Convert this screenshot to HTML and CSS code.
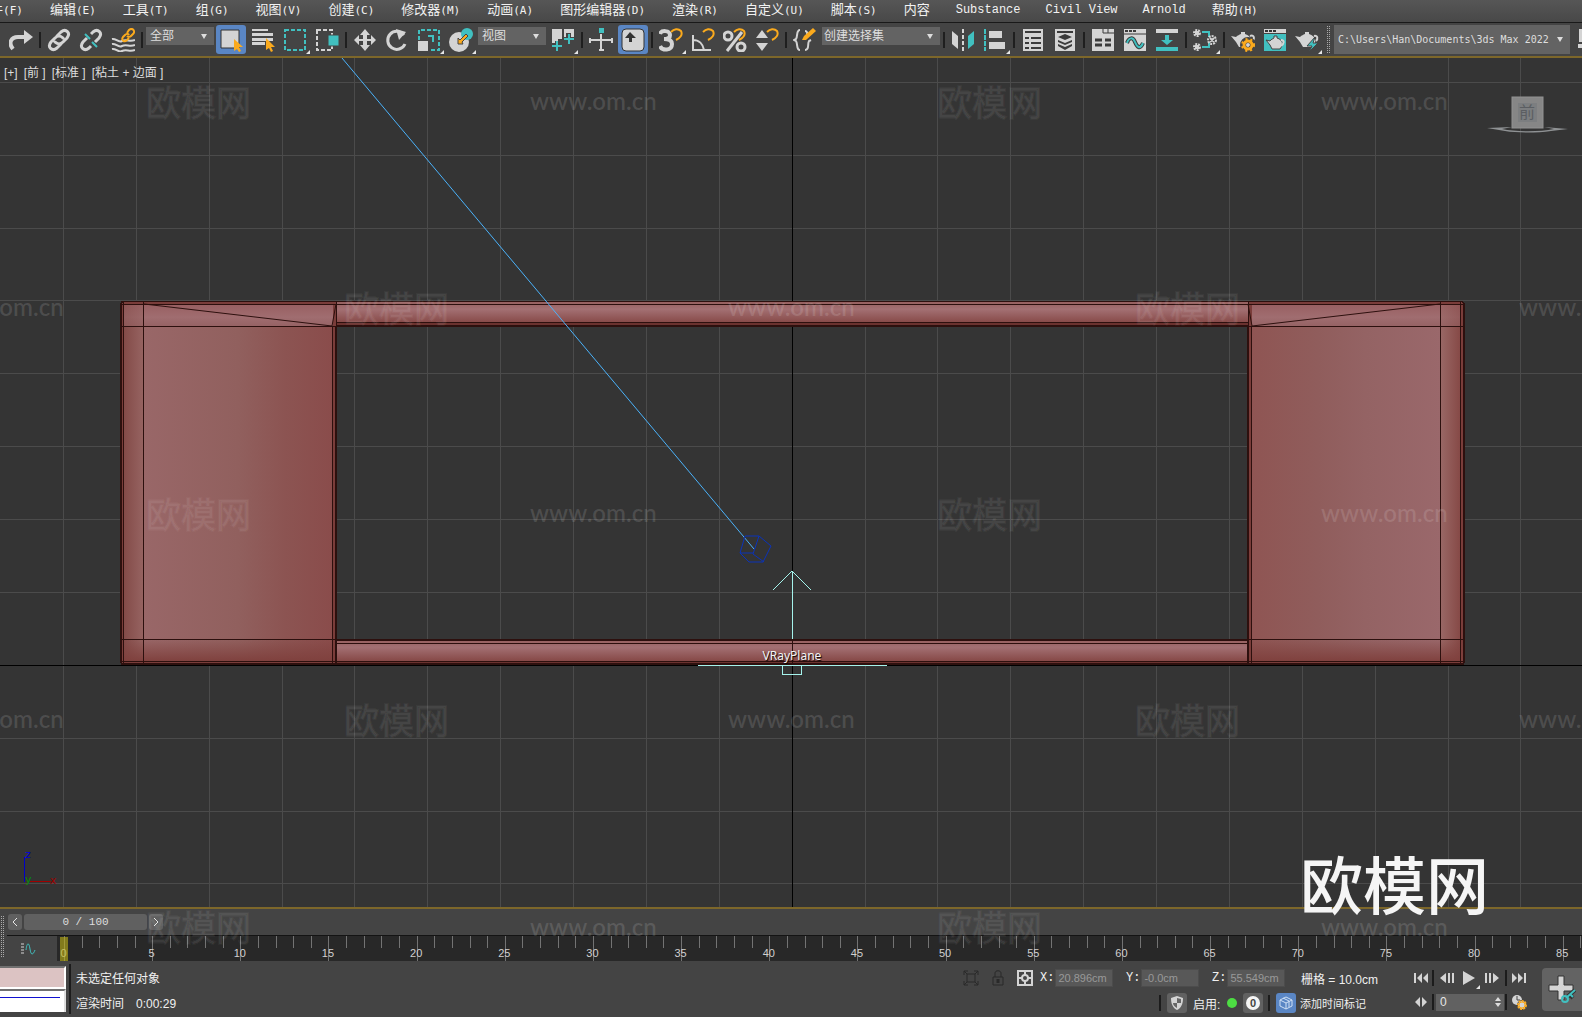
FILE: index.html
```html
<!DOCTYPE html>
<html lang="zh-CN">
<head>
<meta charset="utf-8">
<title>3ds Max 2022</title>
<link rel="stylesheet" href="styles.css">
</head>
<body>
<div class="app">
  <nav class="menu">
    <a href="#">文件<span class="key">(F)</span></a>
    <a href="#">编辑<span class="key">(E)</span></a>
    <a href="#">工具<span class="key">(T)</span></a>
    <a href="#">组<span class="key">(G)</span></a>
    <a href="#">视图<span class="key">(V)</span></a>
    <a href="#">创建<span class="key">(C)</span></a>
    <a href="#">修改器<span class="key">(M)</span></a>
    <a href="#">动画<span class="key">(A)</span></a>
    <a href="#">图形编辑器<span class="key">(D)</span></a>
    <a href="#">渲染<span class="key">(R)</span></a>
    <a href="#">自定义<span class="key">(U)</span></a>
    <a href="#">脚本<span class="key">(S)</span></a>
    <a href="#">内容</a>
    <a href="#" class="latin">Substance</a>
    <a href="#" class="latin">Civil View</a>
    <a href="#" class="latin">Arnold</a>
    <a href="#">帮助<span class="key">(H)</span></a>
  </nav>

  <div class="toolbar">
    <button class="tool" aria-label="重做"><svg viewBox="0 0 24 24"><path d="M4 21C-1 15 2 9 9 9h7" fill="none" stroke="#d4d4d4" stroke-width="4"/><path d="M15 2l9 7-9 7z" fill="#d4d4d4"/></svg></button>
    <span class="sep"></span>
    <button class="tool" aria-label="链接"><svg viewBox="0 0 24 24" fill="none" stroke="#d4d4d4" stroke-width="3" stroke-linecap="round"><path d="M10 8l4-4c5-4 10 1 6 6l-4 4c-3 3-6 2-8 0M14 16l-4 4c-5 4-10-1-6-6l4-4c3-3 6-2 8 0"/></svg></button>
    <button class="tool" aria-label="取消链接"><svg viewBox="0 0 24 24" fill="none" stroke="#d4d4d4" stroke-width="3"><path d="M12 6l2-2c5-4 10 1 6 6l-4 4M12 18l-2 2c-5 4-10-1-6-6l4-4"/><path d="M6 6l5 5M13 14l5 5" stroke="#41c0c0" stroke-width="2"/></svg></button>
    <button class="tool" aria-label="绑定"><svg viewBox="0 0 24 24" fill="none"><path d="M1 11c4-1 6 4 10 2s8 1 13-1M1 16c4-1 6 4 10 2s8 1 13-1M1 21c4-1 6 4 10 2s8 1 13-1" stroke="#d4d4d4" stroke-width="2"/><path d="M16 5l2-3c3-3 7 1 4 4l-2 2c-1 1-3 1-4 0M18 7c-1-2-3-1-4 0l-2 2c-2 3 1 6 4 3l2-2" stroke="#fbaa1d" stroke-width="2"/></svg></button>
    <span class="sep"></span>
    <select class="pick pick-filter" aria-label="选择过滤器"><option>全部</option></select>
    <button class="tool on" aria-label="选择对象"><svg viewBox="0 0 24 24"><path d="M2 2h18v18H2z" fill="#d4d4d4" stroke="#333" stroke-width="1"/><path d="M15 11v12l3-2 2 3 2-1-2-4h4z" fill="#fbaa1d"/></svg></button>
    <button class="tool" aria-label="按名称选择"><svg viewBox="0 0 24 24"><path d="M1 1h16v2H1zM1 5h21v3H1zM1 10h21v3H1zM1 14h13v3H1z" fill="#d4d4d4"/><path d="M15 10v12l3-2 2 4 2-1-2-4h4z" fill="#fbaa1d"/></svg></button>
    <button class="tool more" aria-label="矩形选择区域"><svg viewBox="0 0 24 24"><path d="M2 2h20v20H2z" fill="none" stroke="#41c0c0" stroke-width="2" stroke-dasharray="4 2"/></svg></button>
    <button class="tool" aria-label="窗口交叉"><svg viewBox="0 0 24 24"><path d="M2 2h15v20H2z" fill="none" stroke="#d4d4d4" stroke-width="2" stroke-dasharray="4 2"/><path d="M13 7h11v11H13z" fill="#41c0c0" stroke="#444"/></svg></button>
    <span class="sep"></span>
    <button class="tool" aria-label="移动"><svg viewBox="0 0 24 24"><path d="M12 1l5 6h-3v4h4V7l5 5-5 5v-4h-4v4h3l-5 6-5-6h3v-4H6v4l-5-5 5-5v4h4V7H7z" fill="#d4d4d4"/></svg></button>
    <button class="tool" aria-label="旋转"><svg viewBox="0 0 24 24"><path d="M19 7a9 9 0 1 0 1 9" fill="none" stroke="#d4d4d4" stroke-width="3"/><path d="M11 1l10 3-7 8z" fill="#d4d4d4"/></svg></button>
    <button class="tool more" aria-label="缩放"><svg viewBox="0 0 24 24"><path d="M2 12V2h20v20H13" fill="none" stroke="#41c0c0" stroke-width="2" stroke-dasharray="4 2"/><path d="M1 13h10v10H1z" fill="#d4d4d4"/><path d="M11 8h5v6" fill="none" stroke="#41c0c0" stroke-width="2"/></svg></button>
    <button class="tool more" aria-label="放置"><svg viewBox="0 0 24 24"><circle cx="10" cy="14" r="10" fill="#d4d4d4"/><circle cx="18" cy="6" r="6" fill="#41c0c0"/><path d="M17 6l2 2-6 6 1 2H9v-6l2 2z" fill="#fbaa1d" stroke="#444"/></svg></button>
    <select class="pick pick-filter" aria-label="参考坐标系"><option>视图</option></select>
    <button class="tool more" aria-label="使用轴点中心"><svg viewBox="0 0 24 24"><path d="M1 1h10v10H7v4H1zM13 1h10v12h-3V5h-5v4h-2z" fill="#d4d4d4"/><path d="M6 13v10M1 18h10M18 6v10M13 11h10" stroke="#444" stroke-width="4"/><path d="M6 13v10M1 18h10M18 6v10M13 11h10" stroke="#41c0c0" stroke-width="2"/></svg></button>
    <span class="sep"></span>
    <button class="tool" aria-label="选择并操纵"><svg viewBox="0 0 24 24"><path d="M12 6v17M2 12h20" stroke="#d4d4d4" stroke-width="2"/><path d="M1 10v5M23 10v5M10 22h5" stroke="#d4d4d4" stroke-width="2"/><path d="M10 0h5v5h-5z" fill="#41c0c0"/></svg></button>
    <button class="tool on" aria-label="键盘快捷键覆盖"><svg viewBox="0 0 24 24"><rect x="1" y="1" width="22" height="22" rx="4" fill="#d4d4d4" stroke="#333"/><path d="M9 4l6 6h-4v4H8v-4H4z" fill="#333"/></svg></button>
    <span class="sep"></span>
    <button class="tool more" aria-label="捕捉开关"><svg viewBox="0 0 24 24" fill="none"><path d="M1 6c1-4 10-4 10 1 0 3-2 4-6 4 5 0 8 1 8 5 0 7-10 7-12 2" stroke="#d4d4d4" stroke-width="4"/><path d="M12 4c3-3 7-4 10-1 3 4-1 7-5 9" stroke="#444" stroke-width="4"/><path d="M12 4c3-3 7-4 10-1 2 4-1 7-5 9" stroke="#fbaa1d" stroke-width="2"/></svg></button>
    <button class="tool" aria-label="角度捕捉"><svg viewBox="0 0 24 24" fill="none"><path d="M2 7v15h18M2 12c6 0 10 4 11 10" stroke="#d4d4d4" stroke-width="2"/><path d="M12 4c3-3 7-4 10-1 2 4-1 7-5 9" stroke="#fbaa1d" stroke-width="2"/></svg></button>
    <button class="tool" aria-label="百分比捕捉"><svg viewBox="0 0 24 24" fill="none"><g stroke="#d4d4d4" stroke-width="3"><circle cx="5" cy="8" r="4"/><circle cx="18" cy="19" r="4"/><path d="M19 4L4 23"/></g><path d="M11 4c3-3 7-4 10-1 2 4-1 7-5 9" stroke="#fbaa1d" stroke-width="2"/></svg></button>
    <button class="tool" aria-label="微调器捕捉"><svg viewBox="0 0 24 24" fill="none"><path d="M7 2l6 8H1zM7 23l6-8H1z" fill="#d4d4d4"/><path d="M12 4c3-3 7-4 10-1 2 4-1 7-5 9" stroke="#fbaa1d" stroke-width="2"/></svg></button>
    <span class="sep"></span>
    <button class="tool" aria-label="编辑命名选择集"><svg viewBox="0 0 24 24" fill="none"><path d="M7 2C3 2 5 8 3 11l-2 1 2 1c2 3 0 9 4 9M12 3c3 0 2 3 2 6M12 22c5 0 2-6 4-9l2-1" stroke="#d4d4d4" stroke-width="2"/><path d="M9 12l2-4 9-8 3 3-10 9z" fill="#fbaa1d"/></svg></button>
    <select class="pick pick-set" aria-label="命名选择集"><option>创建选择集</option></select>
    <span class="sep"></span>
    <button class="tool" aria-label="镜像"><svg viewBox="0 0 24 24"><path d="M1 3l6 5v13l-6-5z" fill="#d4d4d4"/><path d="M23 3l-6 5v13l6-5z" fill="#41c0c0"/><path d="M12 1v22" stroke="#d4d4d4" stroke-width="2" stroke-dasharray="4 2"/></svg></button>
    <button class="tool more" aria-label="对齐"><svg viewBox="0 0 24 24"><path d="M2 1v22" stroke="#41c0c0" stroke-width="2" stroke-dasharray="5 1"/><path d="M6 3h13v7H6zM6 14h16v7H6z" fill="#d4d4d4"/></svg></button>
    <span class="sep"></span>
    <button class="tool" aria-label="层资源管理器"><svg viewBox="0 0 24 24"><path d="M2 1h20v22H2z" fill="#d4d4d4"/><path d="M4 4h16M4 10h4M10 10h10M4 15h4M10 15h10M4 20h4M10 20h10" stroke="#3b3b3b" stroke-width="2"/></svg></button>
    <button class="tool" aria-label="层"><svg viewBox="0 0 24 24"><path d="M2 1h20v22H2z" fill="#d4d4d4"/><path d="M4 3h16v2H4zM12 6l7 3-7 3-7-3zM5 12l7 3 7-3v2l-7 3-7-3zM5 16l7 3 7-3v2l-7 4-7-4z" fill="#3b3b3b"/></svg></button>
    <span class="sep"></span>
    <button class="tool" aria-label="显示功能区"><svg viewBox="0 0 24 24"><path d="M1 1h22v22H1z" fill="#d4d4d4"/><path d="M12 1v4h11M17 1v4" fill="none" stroke="#3b3b3b"/><path d="M4 12h7M14 12h6M4 17h7M14 17h6" fill="none" stroke="#3b3b3b" stroke-width="3"/></svg></button>
    <button class="tool" aria-label="曲线编辑器"><svg viewBox="0 0 24 24" fill="none"><path d="M1 1h22v22H1z" fill="#d4d4d4"/><path d="M1 6h22" stroke="#3b3b3b"/><path d="M2 3h3M6 3h3M10 3h3" stroke="#3b3b3b" stroke-width="2"/><path d="M4 15c2-6 6-6 8-1s5 8 8 1" stroke="#3b3b3b" stroke-width="4"/><path d="M4 15c2-6 6-6 8-1s5 8 8 1" stroke="#41c0c0" stroke-width="2"/></svg></button>
    <button class="tool" aria-label="图解视图"><svg viewBox="0 0 24 24"><path d="M1 1h22v4H1z" fill="#d4d4d4"/><path d="M1 19h22v4H1zM10 7h4v5h4l-6 5-6-5h4z" fill="#41c0c0"/></svg></button>
    <span class="sep"></span>
    <button class="tool more" aria-label="材质编辑器"><svg viewBox="0 0 24 24" fill="none"><path d="M9 4h7v5M9 19h7v-5" stroke="#41c0c0" stroke-width="2"/><g stroke="#d4d4d4" stroke-width="2" stroke-dasharray="2 1"><circle cx="4" cy="5" r="3"/><circle cx="4" cy="19" r="3"/><circle cx="19" cy="12" r="4"/></g><path d="M3 4h2v2H3zM3 18h2v2H3zM17 10l4 4M21 10l-4 4" stroke="#d4d4d4" stroke-width="2"/></svg></button>
    <span class="sep"></span>
    <button class="tool" aria-label="渲染设置"><svg viewBox="0 0 24 24" fill="none"><path d="M0 8l5 1c2-2 3-2 5-3V4h4v2c7 2 8 8 4 13H8L5 14z" fill="#d4d4d4"/><path d="M19 8c5-2 5 4 1 6" stroke="#d4d4d4" stroke-width="2"/><circle cx="17" cy="17" r="5" stroke="#444" stroke-width="6"/><circle cx="17" cy="17" r="6" stroke="#fbaa1d" stroke-width="2" stroke-dasharray="2 3"/><circle cx="17" cy="17" r="4" stroke="#fbaa1d" stroke-width="3"/></svg></button>
    <button class="tool" aria-label="渲染帧窗口"><svg viewBox="0 0 24 24" fill="none"><path d="M1 1h22v4H1z" fill="#d4d4d4"/><path d="M1 6h22v17H1z" fill="#41c0c0"/><path d="M2 3h3M6 3h3M10 3h3" stroke="#333" stroke-width="2"/><path d="M3 12l4 1c1-2 3-2 4-3V8h3v2c6 2 7 6 3 11H9l-2-4z" fill="#d4d4d4" stroke="#444"/><path d="M18 12c4 0 3 4 0 6" stroke="#d4d4d4" stroke-width="2"/></svg></button>
    <button class="tool more" aria-label="渲染产品"><svg viewBox="0 0 24 24" fill="none"><path d="M0 8l5 1c2-2 3-2 5-3V4h4v2c7 2 8 8 4 13H8L5 14z" fill="#d4d4d4"/><path d="M19 8c4-1 4 3 2 5" stroke="#d4d4d4" stroke-width="2"/><path d="M20 9l-8 9h5l-3 6 9-9h-5z" fill="#41c0c0" stroke="#444"/></svg></button>
    <span class="grip"></span>
    <select class="pick pick-path" aria-label="项目文件夹"><option>C:\Users\Han\Documents\3ds Max 2022</option></select>
    <button class="tool last" aria-label="项目"><svg viewBox="0 0 24 24"><path d="M4 1h4v13H4zM3 16h10v4H3z" fill="#d4d4d4"/></svg></button>
  </div>

  <main class="viewport">
    <svg class="scene" viewBox="0 58 1582 849" preserveAspectRatio="xMidYMid slice">
      <defs>
        <linearGradient id="legL"><stop offset="0" stop-color="#996768"/><stop offset=".5" stop-color="#91605e"/><stop offset=".75" stop-color="#8c5452"/><stop offset="1" stop-color="#8a4c4b"/></linearGradient>
        <linearGradient id="legR"><stop offset="0" stop-color="#8f5553"/><stop offset=".35" stop-color="#905d5c"/><stop offset=".6" stop-color="#946364"/><stop offset="1" stop-color="#9a686b"/></linearGradient>
        <linearGradient id="sideL"><stop offset="0" stop-color="#834b48"/><stop offset="1" stop-color="#966361"/></linearGradient>
        <linearGradient id="sideR"><stop offset="0" stop-color="#996765"/><stop offset="1" stop-color="#854845"/></linearGradient>
        <linearGradient id="rail" x2="0" y2="1"><stop offset="0" stop-color="#96605f"/><stop offset=".3" stop-color="#a37073"/><stop offset="1" stop-color="#80403d"/></linearGradient>
        <linearGradient id="cap" x2="0" y2="1"><stop offset="0" stop-color="#985f61"/><stop offset=".6" stop-color="#a06d70"/><stop offset="1" stop-color="#966365"/></linearGradient>
        <linearGradient id="foot" x2="0" y2="1"><stop offset="0" stop-color="#7f403d" stop-opacity="0"/><stop offset="1" stop-color="#7f403d"/></linearGradient>
      </defs>
      <path class="grid" d="M63.500 58v849M136.500 58v849M209.500 58v849M282.500 58v849M354.500 58v849M427.500 58v849M500.500 58v849M573.500 58v849M646.500 58v849M719.500 58v849M865.500 58v849M937.500 58v849M1010.500 58v849M1083.500 58v849M1156.500 58v849M1229.500 58v849M1302.500 58v849M1375.500 58v849M1448.500 58v849M1520.500 58v849M0 82.500h1582M0 155.500h1582M0 228.500h1582M0 300.500h1582M0 373.500h1582M0 446.500h1582M0 519.500h1582M0 592.500h1582M0 738.500h1582M0 811.500h1582M0 883.500h1582"/>
      <path class="origin" d="M792.500 58v849M0 665.500h1582"/>
      <rect x="336" y="302" width="913" height="24" fill="url(#rail)"/>
      <rect x="336" y="640" width="913" height="24" fill="url(#rail)"/>
      <path d="M336 323h913v3H336zM336 662h913v3H336z" fill="#6b322f"/>
      <path d="M336 301.500h913M336 304.500h913M336 322.500h913M336 640.500h913M336 643.500h913M336 661.500h913M792.500 640v24" class="edge"/>
      <path d="M336 326h913M336 664h913M336 640h913" class="edge thick"/>
      <path d="M122 302h214v363H123l-2-3V304z" fill="#7a3d3a"/>
      <path d="M143 304h190v358H143z" fill="url(#legL)"/>
      <path d="M124 304h19v358h-19z" fill="url(#sideL)"/>
      <path d="M124 304h209v22H124z" fill="url(#cap)"/>
      <path d="M124 304h19v22h-19z" fill="url(#sideL)" opacity=".5"/>
      <path d="M121 639h212v23H121z" fill="url(#foot)"/>
      <path d="M1249 302h214l2 3v357l-2 3h-214z" fill="#7a3d3a"/>
      <path d="M1252 304h189v358h-189z" fill="url(#legR)"/>
      <path d="M1441 304h20v358h-20z" fill="url(#sideR)"/>
      <path d="M1252 304h209v22h-209z" fill="url(#cap)"/>
      <path d="M1441 304h20v22h-20z" fill="url(#sideR)" opacity=".5"/>
      <path d="M1252 639h212v23h-212z" fill="url(#foot)"/>
      <g class="edge">
        <path d="M121 326.500h215M121 639.500h215M121 304.500h215M121 661.500h215M123.500 302v363M143.500 302v363M332.500 326v338M121 301.500h215"/>
        <path d="M1249 326.500h215M1249 639.500h215M1249 304.500h215M1249 661.500h215M1251.500 326v338M1440.500 302v363M1460.500 302v363M1248 301.500h215M1248.500 302v24M336.500 302v24"/>
      </g>
      <g class="edge thick">
        <path d="M336 326v338H122l-1-2V304l1-2M1248 326v338h215l1-2V304l-1-2"/>
      </g>
      <path class="edge diag" d="M144 304l188 22 4-22M1440 304l-188 22-4-22"/>
      <path d="M342 58l412 491" class="ray"/>
      <path d="M745 536h14l12 10-8 16h-14l-9-9zM759 536l-6 18 11 8M740 553h13" class="target"/>
      <path d="M792.500 639v-68M773 590l19-19 19 19M698 665.500h189M782.500 665v9.500h19V665" class="plane"/>
      <text x="792" y="660" class="plane-name">VRayPlane</text>
      <path d="M24.500 882v-25" stroke="#0000c8"/><path d="M30 881.500h21" stroke="#a00000"/>
      <text x="25" y="858" class="axis" fill="#0000d8">z</text>
      <text x="25" y="883" class="axis" fill="#0a8a0a">y</text>
      <text x="50" y="884" class="axis" fill="#a00000">x</text>
      <path class="compass" d="M1487 128l25-1-10 2c14 3 38 3 52 0l-10-2 24 2-17 2c-14 2-34 2-46 0z" fill="#8f9294"/>
      <rect x="1512" y="97" width="31" height="31" fill="#868686" stroke="#929292"/>
      <rect x="1518" y="103" width="19" height="19" fill="#7c7e80"/>
      <text x="1527" y="118" class="cube">前</text>
    </svg>
    <div class="view-label">
      <button>[+]</button><button>[前 ]</button><button>[标准 ]</button><button>[粘土 + 边面 ]</button>
    </div>
  </main>

  <section class="timeline">
    <span class="grip tall"></span>
    <div class="time-body">
      <div class="slider">
        <button aria-label="上一帧"><svg viewBox="0 0 8 10"><path d="M6 1L2 5l4 4"/></svg></button>
        <button class="thumb">0 / 100</button>
        <button aria-label="下一帧"><svg viewBox="0 0 8 10"><path d="M2 1l4 4-4 4"/></svg></button>
      </div>
      <div class="track">
        <button class="curve" aria-label="打开迷你曲线编辑器"><svg viewBox="0 0 16 12" fill="none"><path d="M1 1h3M1 4h3M1 7h3M1 10h3" stroke="#d4d4d4"/><path d="M6 7c1-8 3-8 4-1s3 6 5 1" stroke="#41c0c0"/></svg></button>
        <div class="ruler"><ol class="ticks" id="ticks"></ol><span class="now"></span></div>
      </div>
    </div>
  </section>

  <footer class="status">
    <div class="listener"><input class="macro" aria-label="宏录制器"><div class="script"><i></i></div></div>
    <div class="messages"><p>未选定任何对象</p><p>渲染时间<span class="clock">0:00:29</span></p></div>
    <div class="coords">
      <div class="row first">
        <button class="flat" aria-label="孤立当前选择"><svg width="16" height="16" viewBox="0 0 16 16" fill="none" stroke="#292929"><path d="M1 5V1h4M11 1h4v4M15 11v4h-4M5 15H1v-4M4 4h8v8H4zM1 1l3 3M15 1l-3 3M15 15l-3-3M1 15l3-3"/></svg></button>
        <button class="flat lock" aria-label="选择锁定"><svg width="12" height="16" viewBox="0 0 12 16" fill="none" stroke="#292929"><path d="M1 7h10v8H1zM3 7V3c0-3 6-3 6 0v4"/><path d="M6 9v4" stroke-width="3"/></svg></button>
        <button class="flat lock" aria-label="绝对模式变换输入"><svg width="16" height="16" viewBox="0 0 16 16" fill="none" stroke="#d4d4d4"><path d="M1 1h14v14H1z" stroke-width="2"/><circle cx="8" cy="8" r="3" stroke-width="2"/><path d="M8 2v3M8 11v3M2 8h3M11 8h3" stroke-width="2"/></svg></button>
        <label>X:<input value="20.896cm"></label>
        <label>Y:<input value="-0.0cm"></label>
        <label>Z:<input value="55.549cm"></label>
        <span class="gridsize">栅格 = 10.0cm</span>
      </div>
      <div class="row second">
        <span class="bar"></span>
        <button class="chip" aria-label="安全"><svg width="14" height="14" viewBox="0 0 14 14"><path d="M7 0l6 2c0 6-2 10-6 12C3 12 1 8 1 2z" fill="#d4d4d4"/><path d="M7 2l4 1v4H7zM3 7h4v5C4 10 3 9 3 7z" fill="#666"/></svg></button>
        <span class="enable">启用:</span>
        <span class="dot"></span>
        <button class="chip" aria-label="启用"><span class="zero">0</span></button>
        <span class="bar"></span>
        <button class="chip blue" aria-label="时间标记"><svg width="14" height="14" viewBox="0 0 14 14" fill="none" stroke="#cfe0f5"><path d="M7 1l6 3v6l-6 3-6-3V4zM1 4l6 3 6-3M7 7v6M4 2l6 3v6"/></svg></button>
        <span class="tag">添加时间标记</span>
      </div>
    </div>
    <div class="playback">
      <button aria-label="转至开头"><svg width="16" height="12" viewBox="0 0 16 12"><path d="M1 1h2v10H1zM9 1v10L4 6zM15 1v10l-5-5z"/></svg></button>
      <span class="bar"></span>
      <button aria-label="上一帧"><svg width="16" height="12" viewBox="0 0 16 12"><path d="M7 1v10L1 6zM9 1h2v10H9zM13 1h2v10h-2z"/></svg></button>
      <button class="play" aria-label="播放"><svg width="16" height="14" viewBox="0 0 16 14"><path d="M2 0l12 7-12 7z"/></svg></button>
      <button aria-label="下一帧"><svg width="16" height="12" viewBox="0 0 16 12"><path d="M1 1h2v10H1zM5 1h2v10H5zM9 1v10l6-5z"/></svg></button>
      <span class="bar"></span>
      <button aria-label="转至结尾"><svg width="16" height="12" viewBox="0 0 16 12"><path d="M1 1v10l5-5zM7 1v10l5-5zM13 1h2v10h-2z"/></svg></button>
      <button aria-label="关键点模式"><svg width="16" height="10" viewBox="0 0 16 10"><path d="M7 0v10L2 5zM9 0v10l5-5z"/></svg></button>
      <span class="bar"></span>
      <input class="frame" value="0" aria-label="当前帧">
      <span class="bar"></span>
      <button aria-label="时间配置"><svg width="16" height="16" viewBox="0 0 16 16" fill="none"><circle cx="6" cy="6" r="5" fill="#d4d4d4"/><path d="M6 2v4h3" stroke="#444"/><circle cx="11" cy="11" r="3" stroke="#444" stroke-width="4"/><circle cx="11" cy="11" r="4" stroke="#fbaa1d" stroke-dasharray="2 1" stroke-width="2"/><circle cx="11" cy="11" r="3" stroke="#fbaa1d"/></svg></button>
    </div>
    <button class="setkey" aria-label="设置关键点"><svg width="28" height="30" viewBox="0 0 28 30" fill="none"><path d="M10 1h6v9h9v6h-9v9h-6v-9H1v-6h9z" fill="#d4d4d4" stroke="#333"/><path d="M18 23l9-8M22 20l3 3" stroke="#333" stroke-width="4"/><path d="M18 23l9-8M22 19l3 3" stroke="#41c0c0" stroke-width="2"/><circle cx="17" cy="24" r="3" stroke="#41c0c0" stroke-width="2"/></svg></button>
  </footer>

  <svg class="marks" viewBox="0 0 1582 1017" preserveAspectRatio="xMidYMid slice">
    <g class="mark-cn">
      <text x="146" y="116">欧模网</text><text x="937" y="116">欧模网</text>
      <text x="344" y="322">欧模网</text><text x="1135" y="322">欧模网</text>
      <text x="146" y="528">欧模网</text><text x="937" y="528">欧模网</text>
      <text x="344" y="734">欧模网</text><text x="1135" y="734">欧模网</text>
      <text x="146" y="941">欧模网</text><text x="937" y="941">欧模网</text>
    </g>
    <g class="mark-url">
      <text x="530" y="110">www.om.cn</text><text x="1321" y="110">www.om.cn</text>
      <text x="-63" y="316">www.om.cn</text><text x="728" y="316">www.om.cn</text><text x="1519" y="316">www.om.cn</text>
      <text x="530" y="522">www.om.cn</text><text x="1321" y="522">www.om.cn</text>
      <text x="-63" y="728">www.om.cn</text><text x="728" y="728">www.om.cn</text><text x="1519" y="728">www.om.cn</text>
      <text x="530" y="936">www.om.cn</text><text x="1321" y="936">www.om.cn</text>
    </g>
    <text x="1300" y="909" class="brand">欧模网</text>
  </svg>
</div>
<script src="ruler.js"></script>
</body>
</html>
```
FILE: styles.css
```css
* { box-sizing: border-box; }
body { margin: 0; background: #444; color: #e6e6e6; font: 12px "Liberation Sans", "Noto Sans CJK SC", sans-serif; }
button, input, select { font: inherit; color: inherit; border: 0; padding: 0; margin: 0; background: none; border-radius: 0; outline: 0; }
button { display: flex; align-items: center; justify-content: center; }
p { margin: 0; }
.app { position: relative; display: flex; flex-direction: column; height: 100vh; overflow: hidden; }

.menu { display: flex; flex: none; height: 23px; overflow: hidden; margin: 0; padding: 0; background: linear-gradient(#565656, #484848); border-bottom: 1px solid #191919; }
.menu a { flex: none; padding: 0 13px 0 14px; line-height: 19px; font-size: 13px; color: #f2f2f2; text-decoration: none; white-space: nowrap; }
.menu a:first-child { margin-left: -37px; }
.menu .key { font: 11px/19px "DejaVu Sans Mono", monospace; }
.menu .latin { padding: 0 12px 0 13px; font: 12px/21px "Liberation Mono", monospace; }

.toolbar { display: flex; flex: none; align-items: center; height: 33px; padding-left: 5px; overflow: hidden; background: #444; }
.tool { position: relative; flex: none; width: 30px; height: 29px; margin: 0 1px; border-radius: 3px; }
.tool svg { width: 24px; height: 24px; }
.tool.on { background: #5a86c4; }
.tool.more::after { content: ""; position: absolute; right: 0; bottom: 0; border: 2px solid transparent; border-right-color: #e6e6e6; border-bottom-color: #e6e6e6; }
.tool.last { margin-right: -20px; }
.sep { flex: none; width: 2px; height: 16px; margin: 0 2px; background: #1f1f1f; }
.grip { flex: none; width: 4px; height: 28px; margin: 0 3px; background: conic-gradient(#aaa 25%, transparent 0) 0 0 / 2px 2px; }
.pick { appearance: none; flex: none; height: 18px; margin: 4px 1px 0; padding: 0 4px; align-self: flex-start; color: #dedede; background: #636363 url("data:image/svg+xml,%3Csvg xmlns='http://www.w3.org/2000/svg' width='6' height='5'%3E%3Cpath d='M0 0h6L3 5z' fill='%23ddd'/%3E%3C/svg%3E") no-repeat right 7px center; }
.pick-filter { width: 68px; }
.pick-set { width: 118px; padding: 0 2px; }
.pick-path { flex: 1 1 236px; min-width: 120px; height: 29px; margin: 0 1px; align-self: center; font: 10px "DejaVu Sans Mono", monospace; }

.viewport { position: relative; flex: 1; min-height: 0; overflow: hidden; background: #343434; border: solid #7d672a; border-width: 2px 0; }
.scene { display: block; width: 100%; height: 100%; }
.scene path { shape-rendering: crispEdges; }
.grid { stroke: #4b4b4b; fill: none; }
.origin { stroke: #000; fill: none; }
.edge { stroke: #2d100e; fill: none; }
.thick { stroke-width: 2; }
.scene .diag, .scene .target, .scene .ray, .scene .compass { shape-rendering: auto; }
.ray { stroke: #4bb2fa; fill: none; }
.target { stroke: #0b33b8; fill: none; }
.plane { stroke: #a5f3ec; fill: none; }
.plane-name { font: 12px "Noto Sans", sans-serif; fill: #f4f4f4; text-anchor: middle; text-shadow: 1px 1px 1px #000; }
.axis { font: 11px "DejaVu Sans", sans-serif; }
.cube { font: 16px "Noto Sans CJK SC", sans-serif; fill: #5b5e62; text-anchor: middle; }
.view-label { position: absolute; left: 4px; top: 7px; display: flex; gap: 6px; line-height: 16px; color: #ddd; }
.view-label button { white-space: pre; }

.timeline { display: flex; flex: none; background: #444; }
.grip.tall { height: 42px; margin: 7px 3px 0 0; }
.time-body { flex: 1; min-width: 0; }
.slider { display: flex; gap: 2px; height: 26px; padding: 5px 0 5px 1px; }
.slider button { width: 14px; border-radius: 3px; background: #606060; }
.slider .thumb { width: 123px; color: #ddd; white-space: pre; font: 11px "Liberation Mono", monospace; }
.slider svg { width: 8px; height: 10px; fill: none; stroke: #e6e6e6; }
.track { display: flex; height: 26px; border-top: 1px solid #141414; }
.curve { flex: none; width: 50px; padding-right: 8px; }
.curve svg { width: 16px; height: 12px; }
.ruler { position: relative; flex: 1; min-width: 0; overflow: hidden; background: #282828; }
.ticks { display: grid; grid-template-columns: repeat(87, 1fr); height: 25px; margin: 0 -16px 0 7px; padding: 0; list-style: none; }
.ticks li { width: 1px; height: 12px; background: #737373; }
.ticks li.major { height: 25px; }
.ticks span { display: block; width: 39px; margin-left: -20px; padding-top: 11px; font-size: 11px; line-height: 13px; text-align: center; color: #d0d0d0; }
.now { position: absolute; left: 3px; top: 1px; width: 8px; height: 24px; background: rgba(190, 178, 20, .6); }

.status { display: flex; flex: none; height: 56px; background: #444; }
.listener { flex: none; width: 66px; padding-top: 5px; }
.macro { display: block; width: 66px; height: 23px; background: #dcc3c3; border: solid #fff; border-width: 2px 2px 2px 0; border-top-color: #707070; }
.script { width: 66px; height: 23px; background: #fff; border-top: 2px solid #707070; border-right: 2px solid #ddd; }
.script i { display: block; width: 60px; height: 1px; margin-top: 6px; background: #1010d0; }
.messages { flex: 1; margin: 3px 0; padding-left: 5px; margin-left: 3px; border-left: 2px solid #1c1c1c; color: #f0f0f0; white-space: nowrap; }
.messages p { line-height: 20px; padding: 5px 0 0; }
.clock { margin-left: 12px; }
.coords { flex: none; width: 450px; padding-top: 6px; }
.row { display: flex; align-items: center; height: 22px; white-space: nowrap; color: #f0f0f0; }
.first { padding-left: 1px; }
.lock { margin-left: 13px; }
.row label { display: flex; align-items: center; gap: 1px; width: 86px; font: 12px "Liberation Mono", monospace; }
.row .lock + label { margin-left: 7px; }
.row input { width: 58px; height: 18px; padding: 0 2px; font: 11px "Liberation Sans", sans-serif; color: #999; background: #585858; border: 1px solid #4c4c4c; }
.gridsize { margin-left: 3px; }
.second { height: 26px; padding-left: 197px; margin-top: 1px; }
.bar { flex: none; width: 2px; height: 16px; background: #1c1c1c; }
.chip { width: 20px; height: 20px; margin-left: 6px; border-radius: 3px; background: #616161; }
.chip.blue { background: #5a86c4; }
.enable { margin-left: 6px; width: 28px; }
.dot { width: 10px; height: 10px; margin: 0 0 0 6px; border-radius: 5px; background: #4ddd43; }
.zero { width: 14px; height: 14px; border-radius: 7px; background: #f4f4f4; color: #444; font: bold 11px/14px "Liberation Sans", sans-serif; }
.second .chip + .bar { margin-left: 5px; }
.tag { margin-left: 4px; font-size: 11px; }
.playback { flex: none; display: grid; grid-template-columns: 18px 6px 22px 22px 24px 4px 22px; grid-template-rows: 24px 24px; align-items: center; padding-top: 5px; width: 128px; }
.playback svg { fill: #d4d4d4; }
.playback .bar { justify-self: center; }
.play { position: relative; }
.play::after { content: ""; position: absolute; right: 0; bottom: -4px; border: 2px solid transparent; border-right-color: #e6e6e6; border-bottom-color: #e6e6e6; }
.frame { grid-column: 3 / 6; width: 68px; height: 17px; padding: 0 4px; background: #616161 url("data:image/svg+xml,%3Csvg xmlns='http://www.w3.org/2000/svg' width='6' height='10'%3E%3Cpath d='M0 4h6L3 0zM0 6h6L3 10z' fill='%23ddd'/%3E%3C/svg%3E") no-repeat right 3px center; }
.setkey { flex: none; width: 42px; height: 43px; margin: 7px -2px 0 2px; padding-right: 2px; border-radius: 4px 0 0 4px; background: #636363; }

.marks { position: absolute; inset: 0; width: 100%; height: 100%; pointer-events: none; }
.mark-cn { font: 400 35px "Noto Sans CJK SC", sans-serif; fill: rgba(255, 255, 255, .08); stroke: rgba(255, 255, 255, .05); stroke-width: 2; }
.mark-url { font: 600 24px Lato, sans-serif; fill: rgba(255, 255, 255, .13); }
.brand { font: 500 63px "Noto Sans CJK SC", sans-serif; fill: #f5f5f5; }
```
FILE: ruler.js
```js
const ticks = document.getElementById("ticks");
for (let frame = 0; frame < 87; frame++) {
  const tick = document.createElement("li");
  if (frame % 5 === 0) {
    tick.className = "major";
    const label = document.createElement("span");
    label.textContent = frame;
    tick.append(label);
  }
  ticks.append(tick);
}
```
